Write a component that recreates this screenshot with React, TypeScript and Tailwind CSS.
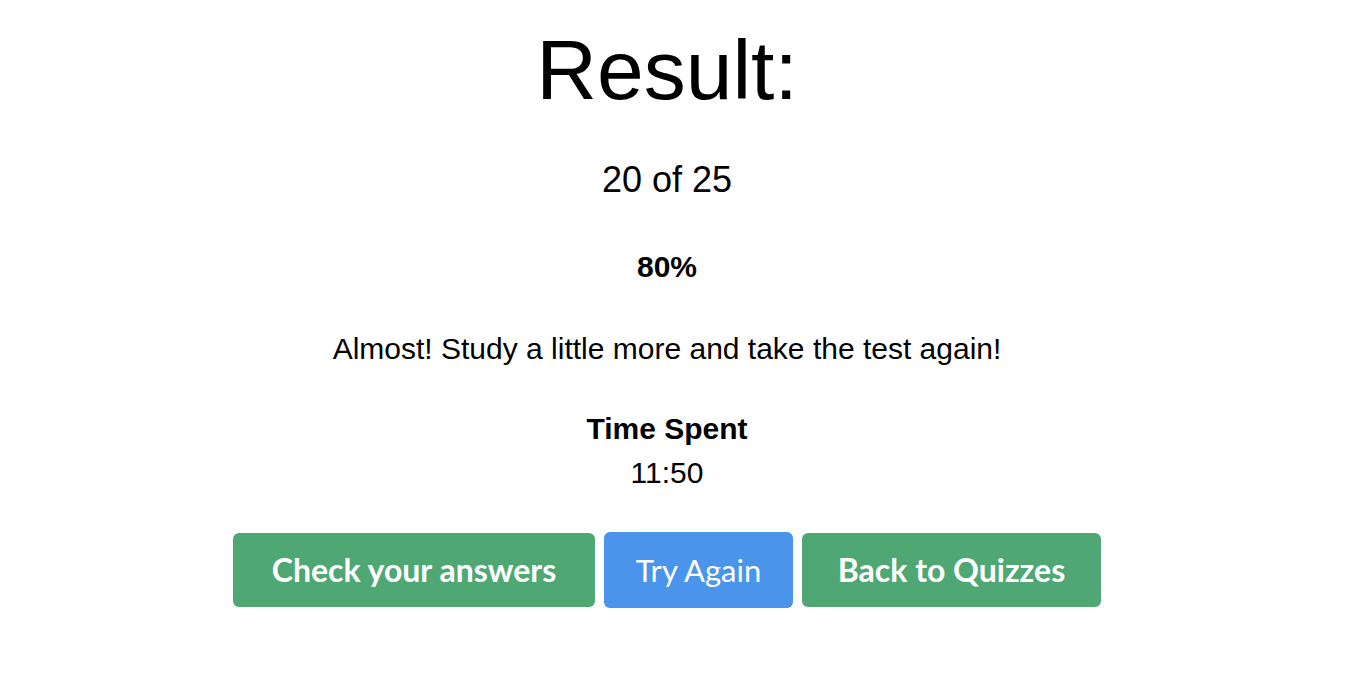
const App = () => {
  return (
    <div className="flex min-h-screen flex-col items-center bg-white pr-5 text-black" style={{ fontFamily: '"Liberation Sans", Arial, sans-serif' }}>
      <h1 className="mt-[18px] text-[84px] leading-[104px]">Result:</h1>
      <p className="mt-[38px] text-[36px] leading-[40px]">20 of 25</p>
      <p className="mt-[51px] text-[30px] font-bold leading-[32px]">80%</p>
      <p className="mt-[50px] text-[30px] leading-[32px]">Almost! Study a little more and take the test again!</p>
      <p className="mt-[48px] text-[30px] font-bold leading-[32px]">Time Spent</p>
      <p className="mt-[12px] text-[30px] leading-[32px]">11:50</p>
      <div className="mt-[43px] flex items-center gap-[9px] font-['Lato',sans-serif] text-[32px] text-white">
        <button className="h-[74px] w-[362px] rounded-[6px] bg-[#4fa874] font-bold">Check your answers</button>
        <button className="h-[76px] w-[189px] rounded-[6px] bg-[#4a94ec] text-[31px]">Try Again</button>
        <button className="h-[74px] w-[299px] rounded-[6px] bg-[#4fa874] font-bold">Back to Quizzes</button>
      </div>
    </div>
  );
};

export default App;
